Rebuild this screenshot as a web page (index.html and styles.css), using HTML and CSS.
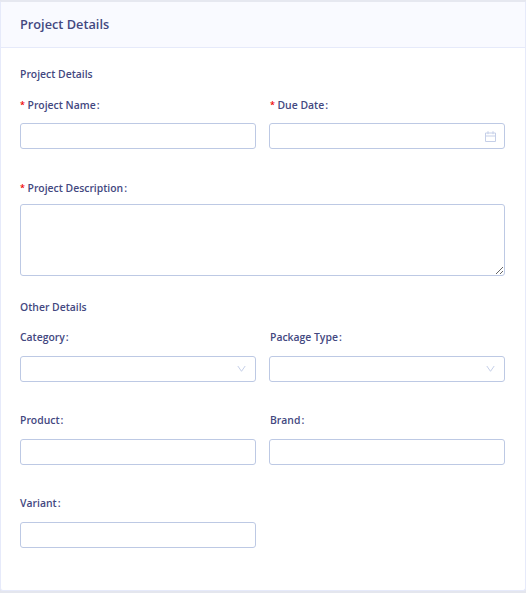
FILE: index.html
```
<!DOCTYPE html>
<html lang="en">
<head>
    <meta charset="UTF-8">
    <meta name="viewport" content="width=device-width, initial-scale=1.0">
    <title>Project Details</title>
    <link rel="stylesheet" href="styles.css">
</head>
<body>
    <div class="card">
        <div class="card-head">Project Details</div>
        <form class="card-body">
            <h3>Project Details</h3>
            <div class="row">
                <div class="form-item">
                    <label for="projectName" class="required">Project Name</label>
                    <input type="text" id="projectName" name="projectName">
                </div>
                <div class="form-item">
                    <label for="dueDate" class="required">Due Date</label>
                    <div class="field">
                        <input type="text" id="dueDate" name="dueDate">
                        <svg class="icon calendar" viewBox="0 0 11 11">
                            <path d="M.5 2h10v8.500h-10zM.5 5h10M3 .2v3M8 .2v3"/>
                        </svg>
                    </div>
                </div>
            </div>
            <div class="form-item description">
                <label for="description" class="required">Project Description</label>
                <textarea id="description" name="description"></textarea>
            </div>
            <h3 class="other-title">Other Details</h3>
            <div class="row other">
                <div class="form-item">
                    <label for="category">Category</label>
                    <div class="field">
                        <input type="text" id="category" name="category" readonly>
                        <svg class="icon arrow" viewBox="0 0 9 8">
                            <path d="M.8 1l3.700 5.300L8.200 1"/>
                        </svg>
                    </div>
                </div>
                <div class="form-item">
                    <label for="packageType">Package Type</label>
                    <div class="field">
                        <input type="text" id="packageType" name="packageType" readonly>
                        <svg class="icon arrow" viewBox="0 0 9 8">
                            <path d="M.8 1l3.700 5.300L8.200 1"/>
                        </svg>
                    </div>
                </div>
                <div class="form-item">
                    <label for="product">Product</label>
                    <input type="text" id="product" name="product">
                </div>
                <div class="form-item">
                    <label for="brand">Brand</label>
                    <input type="text" id="brand" name="brand">
                </div>
                <div class="form-item">
                    <label for="variant">Variant</label>
                    <input type="text" id="variant" name="variant">
                </div>
            </div>
        </form>
    </div>
</body>
</html>
```
FILE: styles.css
```
* {
    box-sizing: border-box;
}

body {
    margin: 0;
    height: 593px;
    overflow: hidden;
    background-color: #e4e6ee;
    font-family: "Open Sans", sans-serif;
    font-size: 10.4px;
    font-weight: 600;
    color: #43487f;
}

.card {
    height: 591px;
    border: 1px solid #e6eafa;
    border-top: 2px solid #e6e8f0;
    border-radius: 3px;
    background-color: white;
}

.card-head {
    height: 46px;
    padding: 0 19px;
    border-bottom: 1px solid #e6eafa;
    background-color: #f9faff;
    font-size: 12.75px;
    line-height: 45px;
}

.card-body {
    padding: 16px 20px 0 19px;
}

h3 {
    margin: 0 0 11px;
    font-size: 10.4px;
    font-weight: 600;
    line-height: 20px;
}

h3.other-title {
    margin-bottom: 10px;
}

.row {
    display: grid;
    grid-template-columns: 236px 236px;
    column-gap: 13px;
}

.form-item {
    height: 83px;
}

.form-item.description {
    height: 119px;
}

label {
    display: block;
    height: 20px;
    margin-bottom: 8px;
    line-height: 20px;
}

label::after {
    content: ":";
    margin-left: 1px;
}

.required::before {
    content: "*";
    display: inline-block;
    width: 7.5px;
    font-size: 9px;
    line-height: 1;
    vertical-align: 1px;
    color: #f00000;
}

.description label {
    margin-bottom: 6px;
}

.other label {
    margin-bottom: 9px;
}

.row .form-item:nth-child(even) label {
    padding-left: 1px;
}

.field {
    position: relative;
}

input,
textarea {
    display: block;
    width: 100%;
    height: 26px;
    margin: 0;
    padding: 4px 8px;
    border: 1px solid #bdc9e4;
    border-radius: 3px;
    background-color: white;
    font: inherit;
    color: inherit;
    outline: none;
}

textarea {
    height: 72px;
    resize: vertical;
}

.icon {
    position: absolute;
    fill: none;
    stroke: #c5cfe8;
}

.calendar {
    top: 8px;
    right: 9px;
    width: 11px;
    height: 11px;
}

.arrow {
    top: 9px;
    right: 10px;
    width: 9px;
    height: 8px;
}
```
